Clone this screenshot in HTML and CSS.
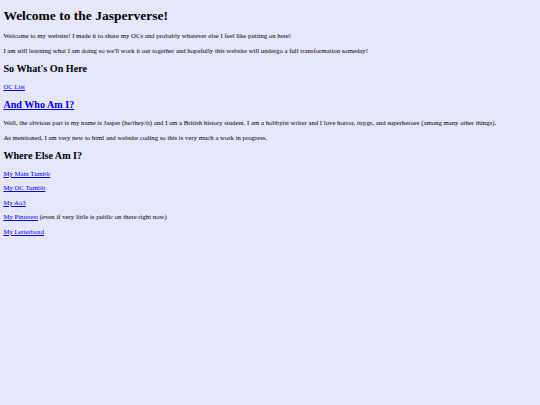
FILE: index.html
```html
<!DOCTYPE html>
<html>
<head>
<meta charset="utf-8">
<title>Jasperverse</title>
<link rel="stylesheet" href="styles.css">
</head>
<body>
<h1>Welcome to the Jasperverse!</h1>
<p>Welcome to my website! I made it to share my OCs and probably whatever else I feel like putting on here!</p>
<p>I am still learning what I am doing so we'll work it out together and hopefully this website will undergo a full transformation someday!</p>
<h2>So What's On Here</h2>
<p><a href="#">OC List</a></p>
<h2><a href="#">And Who Am I?</a></h2>
<p>Well, the obvious part is my name is Jasper (he/they/it) and I am a British history student. I am a hobbyist writer and I love horror, ttrpgs, and superheroes (among many other things).</p>
<p>As mentioned, I am very new to html and website coding so this is very much a work in progress.</p>
<h2>Where Else Am I?</h2>
<p><a href="#">My Main Tumblr</a></p>
<p><a href="#">My OC Tumblr</a></p>
<p><a href="#">My Ao3</a></p>
<p><a href="#">My Pinterest</a> (even if very little is public on there right now)</p>
<p><a href="#">My Letterboxd</a></p>
</body>
</html>
```
FILE: styles.css
```css
html {
  font-size: 6.75px;
}
body {
  margin: 3.375px;
  font-family: "Liberation Serif", "Times New Roman", serif;
  font-size: 6.75px;
  line-height: 1.149;
  background: #e6e6fa;
  color: #000;
}
h1 {
  font-size: 2em;
  margin: 4.5px 0 0.67em;
}
h2 {
  font-size: 1.5em;
  margin: 0.83em 0;
}
p {
  margin: 1em 0;
}
a {
  color: #0000ee;
}
```
